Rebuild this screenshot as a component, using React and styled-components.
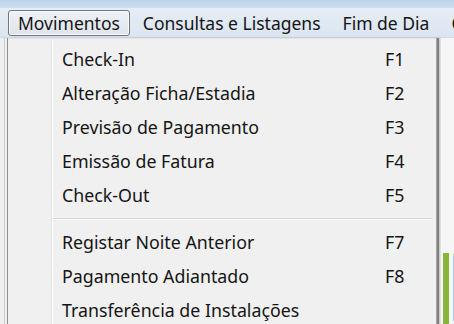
import React from 'react'
import styled, { createGlobalStyle } from 'styled-components';

const GlobalStyle = createGlobalStyle`
body{
    margin: 0;
    overflow: hidden;
    background: #f3f3f3;
}
`;

const Window = styled.div`
width: 454px;
height: 324px;
display: flex;
flex-direction: column;
overflow: hidden;
font-family: "Noto Sans", "Open Sans", sans-serif;
color: #151515;
`;

const TitleStrip = styled.div`
height: 8px;
background: linear-gradient(#bcd3ec, #cddff1);
flex-shrink: 0;
`;

const MenuBar = styled.div`
height: 30px;
flex-shrink: 0;
display: flex;
align-items: center;
padding-left: 8px;
background: linear-gradient(#e6edf6, #dbe5f1);
border-bottom: 1px solid #d0dbe8;
box-sizing: border-box;
`;

const MenuTitle = styled.div`
height: 26px;
box-sizing: border-box;
display: flex;
align-items: center;
padding: 0 ${p => p.$active ? 9 : 10}px;
margin-right: ${p => p.$active ? 2 : 0}px;
font-size: 17.5px;
white-space: nowrap;
border: ${p => p.$active ? '1px solid #6f7680' : '1px solid transparent'};
border-radius: 3px;
background: ${p => p.$active ? 'linear-gradient(#eef2f7, #dfe4ea)' : 'transparent'};
box-shadow: ${p => p.$active ? 'inset 0 0 0 1px #f8fafc' : 'none'};
`;

const Body = styled.div`
flex: 1;
display: flex;
`;

const Frame = styled.div`
width: 8px;
flex-shrink: 0;
background: #eef0f2;
border-right: 1px solid #8f8f8f;
box-sizing: border-box;
position: relative;
&::before{
    content: '';
    position: absolute;
    left: 4px;
    top: 0;
    bottom: 0;
    width: 1px;
    background: #c9ccd0;
}
`;

const Dropdown = styled.div`
width: 428px;
flex-shrink: 0;
background: #f0f0f0;
padding-top: 3px;
box-sizing: border-box;
box-shadow: 1px 0 0 #a7a7a7, 3px 0 0 #7f7f7f, 4px 0 2px #b8b8b8;
border-top: 1px solid #e4e4e4;
background-image: linear-gradient(to right, #f0f0f0 43px, #e2e3e3 43px, #e2e3e3 44px, #ffffff 44px, #ffffff 45px, #f0f0f0 45px);
`;

const Item = styled.div`
height: 34px;
display: flex;
align-items: center;
padding-left: 54px;
font-size: 17.8px;
`;

const Label = styled.span`
width: 323px;
flex-shrink: 0;
white-space: nowrap;
`;

const Key = styled.span``;

const Separator = styled.div`
height: 13px;
margin-left: 45px;
margin-right: 4px;
display: flex;
flex-direction: column;
justify-content: center;
&::before{
    content: '';
    height: 1px;
    background: #d7d7d7;
}
&::after{
    content: '';
    height: 1px;
    background: #ffffff;
}
`;

const Side = styled.div`
flex: 1;
margin-left: 5px;
background: #f6f6f6;
display: flex;
align-items: flex-end;
gap: 4px;
`;

const GreenBar = styled.div`
height: 74px;
width: 6px;
margin-left: 2px;
background: #8ab43a;
`;

const TealEdge = styled.div`
height: 68px;
width: 3px;
margin-bottom: 6px;
border-radius: 3px 0 0 0;
background: #9fd3dc;
`;

const items = [
    ['Check-In', 'F1'],
    ['Alteração Ficha/Estadia', 'F2'],
    ['Previsão de Pagamento', 'F3'],
    ['Emissão de Fatura', 'F4'],
    ['Check-Out', 'F5'],
    null,
    ['Registar Noite Anterior', 'F7'],
    ['Pagamento Adiantado', 'F8'],
    ['Transferência de Instalações', ''],
];

function App() {
    return (
        <Window>
            <GlobalStyle />
            <TitleStrip />
            <MenuBar>
                <MenuTitle $active>Movimentos</MenuTitle>
                <MenuTitle>Consultas e Listagens</MenuTitle>
                <MenuTitle>Fim de Dia</MenuTitle>
                <MenuTitle>C</MenuTitle>
            </MenuBar>
            <Body>
                <Frame />
                <Dropdown>
                    {items.map((it, i) => it ? (
                        <Item key={i}><Label>{it[0]}</Label><Key>{it[1]}</Key></Item>
                    ) : <Separator key={i} />)}
                </Dropdown>
                <Side><GreenBar /><TealEdge /></Side>
            </Body>
        </Window>
    )
}

export default App;
